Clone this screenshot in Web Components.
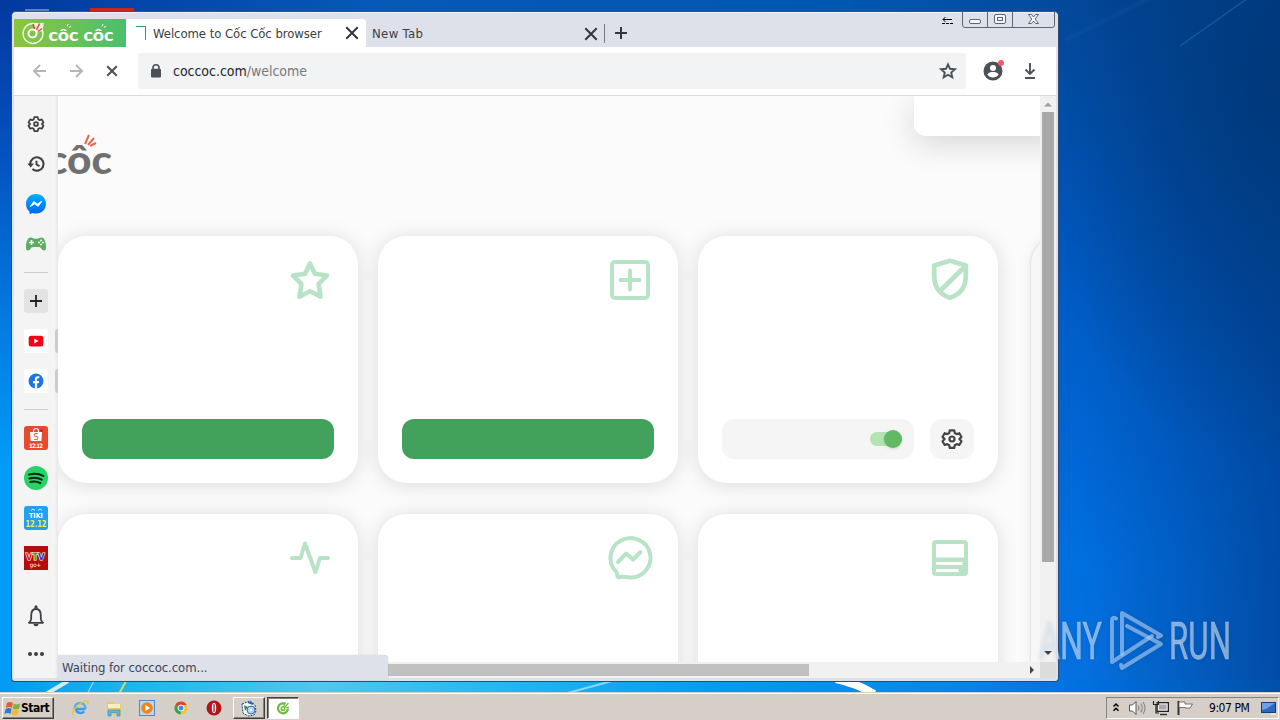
<!DOCTYPE html>
<html lang="vi">
<head>
<meta charset="utf-8">
<title>Welcome to Cốc Cốc browser</title>
<style>
  :root {
    --ui-font: "DejaVu Sans Condensed", "DejaVu Sans", "Liberation Sans", sans-serif;
    --chrome: #dee1e9;
    --mint: #b9e3c7;
    --green: #42a15b;
  }
  body {
    margin: 0;
    width: 1280px;
    height: 720px;
    overflow: hidden;
    font-family: var(--ui-font);
  }
</style>
</head>
<body>
<desktop-scene>
  <browser-window>
    <tab-strip slot="tabs"></tab-strip>
    <tool-bar slot="toolbar" host="coccoc.com" path="/welcome"></tool-bar>
    <side-bar slot="sidebar"></side-bar>
    <welcome-page slot="page">
      <feature-card icon="star"><action-button></action-button></feature-card>
      <feature-card icon="plus-box"><action-button></action-button></feature-card>
      <feature-card icon="shield"><toggle-row></toggle-row></feature-card>
      <feature-card icon="pulse"></feature-card>
      <feature-card icon="chat"></feature-card>
      <feature-card icon="panel"></feature-card>
    </welcome-page>
    <scroll-bar slot="vscroll" axis="y"></scroll-bar>
    <scroll-bar slot="hscroll" axis="x"></scroll-bar>
    <status-bubble slot="status">Waiting for coccoc.com...</status-bubble>
  </browser-window>
  <water-mark slot="mark"></water-mark>
  <task-bar slot="taskbar"></task-bar>
</desktop-scene>

<script>
(function () {
  function define(name, html, setup) {
    const template = document.createElement('template');
    template.innerHTML = html;
    customElements.define(name, class extends HTMLElement {
      constructor() {
        super();
        this.attachShadow({ mode: 'open' });
        this.shadowRoot.appendChild(template.content.cloneNode(true));
      }

      connectedCallback() {
        if (setup) setup(this, this.shadowRoot);
      }
    });
  }

  const GEAR = '<path d="M9.8 3.3h4.4l.6 2.7 1.9 1.1 2.6-.9 2.2 3.8-2 1.9v.4l2 1.9-2.2 3.8-2.6-.9-1.9 1.1-.6 2.7H9.8l-.6-2.7-1.900-1.100-2.600.9-2.200-3.800 2-1.900v-.4l-2-1.900 2.200-3.800 2.600.9L9.200 6z" fill="none" stroke="currentColor" stroke-width="2.200" stroke-linejoin="round"/><circle cx="12" cy="12" r="2.500" fill="none" stroke="currentColor" stroke-width="2.200"/>';

  // [viewBox, markup] by icon name
  const ICONS = {
    'star': ['0 0 48 48', '<path d="M24 7.500l4.900 10.300 12.100 1.700-8.400 8.300 2 12.800L24 35.300l-10.600 5.300 2-12.800L7 19.500l12.100-1.700z" fill="none" stroke="currentColor" stroke-width="4.600" stroke-linejoin="round"/>'],
    'plus-box': ['0 0 48 48', '<rect x="6" y="6" width="36" height="36" rx="3" fill="none" stroke="currentColor" stroke-width="4"/><path d="M24 14.500v19M14.500 24h19" stroke="currentColor" stroke-width="4" stroke-linecap="round"/>'],
    'shield': ['0 0 48 48', '<path d="M24 4.700L39.800 9.500V20c0 10.500-5.500 18.500-15.800 21.700C13.700 38.500 8.200 30.500 8.200 20V9.500z" fill="none" stroke="currentColor" stroke-width="4.800" stroke-linejoin="round"/><path d="M39 10.500L14 35" stroke="currentColor" stroke-width="5"/>'],
    'pulse': ['0 0 48 48', '<path d="M6 24h8.500l4.500-14.500L29.300 38 34 24h8" fill="none" stroke="currentColor" stroke-width="4" stroke-linecap="round" stroke-linejoin="round"/>'],
    'chat': ['0 0 48 48', '<path d="M12.200 43.500C10.500 42.800 11.800 39 9.800 37.200A20 19.700 0 1 1 24 43.500C20 43.500 18.500 41.500 12.200 43.500z" fill="none" stroke="currentColor" stroke-width="4" stroke-linejoin="round"/><path d="M12 28l8.200-8.500 6.800 6L34.500 18" fill="none" stroke="currentColor" stroke-width="4" stroke-linecap="round" stroke-linejoin="round"/>'],
    'panel': ['0 0 48 48', '<rect x="6" y="6" width="36" height="36" rx="4" fill="currentColor"/><path d="M10 10h28v13.500H10zM10 28h26.500v3H10zM10 35h22.500v3H10z" fill="#fff"/>'],
    'gear': ['0 0 24 24', GEAR],
    'gear-small': ['-3.200 -3.200 30.400 30.400', GEAR],
    'close': ['0 0 24 24', '<path d="M6.300 6.300l11.400 11.400M17.700 6.300L6.300 17.700" stroke="currentColor" stroke-width="2"/>'],
    'stop': ['0 0 24 24', '<path d="M7.200 7.200l9.600 9.600M16.800 7.200l-9.600 9.600" stroke="currentColor" stroke-width="2"/>'],
    'back': ['0 0 24 24', '<path d="M18 12H6.800M12 6l-6 6 6 6" fill="none" stroke="currentColor" stroke-width="1.900"/>'],
    'forward': ['0 0 24 24', '<path d="M6 12h11.200M12 6l6 6-6 6" fill="none" stroke="currentColor" stroke-width="1.900"/>'],
    'plus': ['0 0 24 24', '<path d="M12 6v12M6 12h12" stroke="currentColor" stroke-width="2"/>'],
    'lock': ['0 0 24 24', '<path d="M9 11V8.700a3 3 0 0 1 6 0V11" fill="none" stroke="currentColor" stroke-width="1.600"/><rect x="7" y="9.800" width="10" height="8.700" rx="1.300" fill="currentColor"/>'],
    'bookmark': ['0 0 24 24', '<path d="M12 5.300l2 4.500 4.900.4-3.700 3.300 1.100 4.900-4.300-2.600-4.300 2.600 1.100-4.900-3.700-3.300 4.900-.4z" fill="none" stroke="currentColor" stroke-width="1.900"/>'],
    'user': ['0 0 24 24', '<circle cx="12" cy="12" r="9.500" fill="currentColor"/><circle cx="12" cy="9" r="3" fill="#fff"/><path d="M6.300 15.600c1.200-2 3.500-2.600 5.700-2.600s4.500.6 5.700 2.600a7 7 0 0 1-11.400 0z" fill="#fff"/><circle cx="20" cy="4" r="3" fill="#f9556b"/>'],
    'download': ['0 0 24 24', '<path d="M12 4v10M7.500 10.500L12 15l4.500-4.500M7 19h10" fill="none" stroke="currentColor" stroke-width="1.900"/>'],
    'history': ['0 0 24 24', '<path d="M6.200 12a6.700 6.700 0 1 1 2.200 5" fill="none" stroke="currentColor" stroke-width="2.100"/><path d="M3.300 11.500h6.700L6.700 15.500z" fill="currentColor"/><path d="M12.500 8.700v3.800l3 1.700" fill="none" stroke="currentColor" stroke-width="1.900"/>'],
    'messenger': ['0 0 24 24', '<defs><linearGradient id="m" x1="0" y1="0" x2="0" y2="1"><stop stop-color="#00b0ff"/><stop offset="1" stop-color="#0264f5"/></linearGradient></defs><path d="M12 2c5.700 0 10 4.200 10 9.800s-4.300 9.800-10 9.800c-1.300 0-2.300-.1-3.200-.5L5.500 22v-2.500C3.200 17.700 2 15 2 11.800 2 6.200 6.300 2 12 2z" fill="url(#m)"/><path d="M6.300 14.600l3.500-5 3.600 2.500 4.300-2.800-3.500 5-3.600-2.500z" fill="#fff" stroke="#fff" stroke-linejoin="round"/>'],
    'gamepad': ['0 0 24 24', '<path d="M6.500 5.500c2 0 2 1.200 5.500 1.200s3.500-1.200 5.500-1.200c3.500 0 4.700 6.300 4.500 10.500-.1 3.200-3.300 3.200-4.500.8-.8-1.600-1.700-1.800-5.500-1.800s-4.700.2-5.500 1.800c-1.200 2.400-4.400 2.400-4.500-.8C1.800 11.800 3 5.500 6.500 5.500z" fill="#5bae5f"/><path d="M7.500 8v5M5 10.500h5" stroke="#fff" stroke-width="1.600"/><g fill="#fff"><circle cx="17" cy="8.500" r="1"/><circle cx="17" cy="12.500" r="1"/><circle cx="15" cy="10.500" r="1"/><circle cx="19" cy="10.500" r="1"/></g>'],
    'add': ['0 0 24 24', '<rect width="24" height="24" rx="3" fill="#e3e3e3"/><path d="M12 6v12M6 12h12" stroke="#222" stroke-width="1.800"/>'],
    'youtube': ['0 0 24 24', '<rect width="24" height="24" rx="2" fill="#fff"/><rect x="4.700" y="6.700" width="14.600" height="10.800" rx="2.500" fill="#f50014"/><path d="M10.300 9.500v5l4.200-2.500z" fill="#fff"/>'],
    'facebook': ['0 0 24 24', '<rect width="24" height="24" rx="2" fill="#fff"/><circle cx="12" cy="12" r="7.500" fill="#1b74e8"/><path d="M10.900 19.400v-5.200H9v-2.300h1.900v-1.700c0-2 1.200-3 2.900-3 .8 0 1.500.1 1.500.1v1.900h-1c-.9 0-1.200.6-1.200 1.100v1.600h2.100l-.4 2.300h-1.700v5.200z" fill="#fff"/>'],
    'shop': ['0 0 24 24', '<rect width="24" height="24" rx="3" fill="#e8492f"/><path d="M9.500 6V5a2.500 2.500 0 0 1 5 0v1" fill="none" stroke="#fff" stroke-width="1.200"/><path d="M6 6h12l-.6 9H6.600z" fill="#fff"/><text x="12" y="13.800" text-anchor="middle" font-size="9" fill="#e8492f">S</text><text x="12" y="21.500" text-anchor="middle" font-size="6" font-weight="700" fill="#fff" textLength="14">12.12</text><circle cx="17.500" cy="4.500" r="1.300" fill="#b5281b"/>'],
    'spotify': ['0 0 24 24', '<circle cx="12" cy="12" r="12" fill="#25d366"/><path d="M5 8.600c5-1.400 10-1 14.300 1.400M5.500 12.500c4.500-1.200 8.500-.8 12.200 1.200M6.200 16c3.600-.9 7-.6 10.200 1.100" fill="none" stroke="#0d1f14" stroke-width="2" stroke-linecap="round"/>'],
    'tiki': ['0 0 24 24', '<rect width="24" height="24" rx="3" fill="#22a0f2"/><text x="12" y="11.500" text-anchor="middle" font-size="7" font-weight="700" fill="#fff" textLength="14" lengthAdjust="spacingAndGlyphs">TIKI</text><path d="M7 4.500l2-1.500 2 1.500M14 4.500L16 3l2 1.500" fill="none" stroke="#fff" stroke-width=".8"/><text x="12" y="20.700" text-anchor="middle" font-size="8.500" font-weight="700" fill="#fbe84d" textLength="21" lengthAdjust="spacingAndGlyphs">12.12</text>'],
    'vtv': ['0 0 24 24', '<rect width="24" height="24" fill="#b50d0d"/><g font-size="9.500" font-weight="700" stroke="#fff" stroke-width="1.200" paint-order="stroke"><text x="1.700" y="13.500" fill="#e02020">V</text><text x="8.200" y="13.500" fill="#1fae3c">T</text><text x="14" y="13.500" fill="#2238c8">V</text></g><text x="11.500" y="20.500" text-anchor="middle" font-size="6" fill="#fff">go+</text>'],
    'bell': ['0 0 24 24', '<path d="M5 18.800c1.500-1.200 2.200-2.300 2.200-4.300v-3C7.200 7.500 9 5 12 5s4.800 2.500 4.800 6.500v3c0 2 .7 3.100 2.200 4.300z" fill="none" stroke="currentColor" stroke-width="1.800" stroke-linejoin="round"/><path d="M12 4.500V2.800" stroke="currentColor" stroke-width="3" stroke-linecap="round"/><path d="M9.500 20a2.500 2.300 0 0 0 5 0z" fill="currentColor"/>'],
    'dots': ['0 0 24 24', '<g fill="currentColor"><circle cx="6" cy="12" r="2"/><circle cx="12" cy="12" r="2"/><circle cx="18" cy="12" r="2"/></g>'],
    'flag-logo': ['0 0 16 16', '<g transform="skewX(-12) translate(2.500 0)"><path d="M1 3c2-1.500 4-1.500 6 0v5C5 6.500 3 6.500 1 8z" fill="#ea5b28"/><path d="M8 3.400c2 1.300 4 1.300 6.500 0v5c-2.500 1.300-4.500 1.300-6.500 0z" fill="#7bb33c"/><path d="M1 9c2-1.500 4-1.500 6 0v5c-2-1.500-4-1.500-6 0z" fill="#2f78d0"/><path d="M8 9.400c2 1.300 4 1.300 6.500 0v5c-2.500 1.300-4.500 1.300-6.500 0z" fill="#f5bb22"/></g>'],
    'ie': ['0 0 18 18', '<path d="M14.500 10H5.200c.2 4.500 5.500 5 8 2.300" fill="none" stroke="#3f9be0" stroke-width="2.600"/><path d="M3.700 10C3.500 2 14.300 2 14.500 10" fill="none" stroke="#56afe9" stroke-width="2.500"/><path d="M2 16C-1 12 12 .5 16.500 2.500c1 .6.500 2-.5 3" fill="none" stroke="#e4c33f" stroke-width="1.300"/>'],
    'folder': ['0 0 18 18', '<path d="M2 3h6l1 2h7v11H2z" fill="#e9ca63"/><path d="M3 5h12v4H3z" fill="#fbf1b8"/><path d="M3 17v-6h12v6h-3v-3.500H6V17z" fill="#66b3e3" stroke="#3c86bd" stroke-width=".6"/>'],
    'media': ['0 0 18 18', '<rect x="1.500" y="1.500" width="15" height="15" fill="#b8d8f2" stroke="#4b8ac6"/><circle cx="9" cy="9" r="5.800" fill="#f0861a"/><path d="M7.300 6v6L12 9z" fill="#fff"/>'],
    'chrome': ['0 0 18 18', '<circle cx="9" cy="9" r="6.500" fill="#f4c430"/><path d="M3.400 5.700A6.500 6.500 0 0 1 14.700 6H9a3 3 0 0 0-2.700 4.500z" fill="#dc4336"/><path d="M3.400 5.700l3.200 5.200L9.500 12l-1.300 3.500A6.500 6.500 0 0 1 3.400 5.700z" fill="#2da34f"/><circle cx="9" cy="9" r="3" fill="#4285f4" stroke="#fff"/>'],
    'opera': ['0 0 18 18', '<circle cx="9" cy="9" r="7.500" fill="#b3141c"/><ellipse cx="9" cy="9" rx="2.200" ry="5" fill="#fff"/><path d="M9 5v8" stroke="#b3141c" stroke-width="1.300"/>'],
    'tool-app': ['0 0 18 18', '<path d="M2 5l8-3 5 4 1 6-2 4-6 1-5-3z" fill="#f5f9fd" stroke="#173f7b" stroke-dasharray="2 1"/><circle cx="11" cy="11" r="4" fill="#b3d2f0" stroke="#3d68a8"/><circle cx="11" cy="11" r="1.200" fill="#fff"/><path d="M4 6l4 2-3 4z" fill="#38904e"/><path d="M8 3l5 2" stroke="#2067c0" stroke-width="2"/>'],
    'coccoc': ['0 0 18 18', '<path d="M11.500 5A5 5 0 1 0 14 9.500" fill="none" stroke="#6dbb3f" stroke-width="2.300"/><circle cx="9" cy="9.500" r="1.800" fill="none" stroke="#6dbb3f" stroke-width="1.500"/><path d="M10 7l1-3.500M11 8l3.500-4M12 9l3-1" stroke="#6dbb3f" stroke-width="1.200"/>'],
    'chevrons': ['0 0 16 16', '<path d="M5.500 6.500L8 4l2.500 2.500M5.500 10.800L8 8.300l2.500 2.500" fill="none" stroke="#000" stroke-width="1.500"/>'],
    'speaker': ['0 0 18 18', '<path d="M1.500 6h3L8 2.500v13L4.500 12h-3z" fill="#fff" stroke="#555"/><path d="M10 6.500q2 2.500 0 5M12.500 4.500q3.500 4.500 0 9M15 3q4 6 0 12" fill="none" stroke="#888" stroke-width="1.100"/>'],
    'network': ['0 0 18 18', '<rect x="5" y="3.500" width="11.500" height="9" fill="#8d8d8d" stroke="#222"/><path d="M6.500 5h8.500v6H6.500z" fill="#aaa" stroke="#fff" stroke-width=".8"/><path d="M8 15.500h7" stroke="#333" stroke-width="1.500"/><path d="M1.500 2v3.500h5V2M4 5.500V14h3" fill="none" stroke="#222" stroke-width="1.200"/>'],
    'flag': ['0 0 18 18', '<path d="M2.500 2v14" stroke="#333" stroke-width="2"/><path d="M3 3h6v2h7.500L14 9H9V8.500H3z" fill="#fff" stroke="#555" stroke-width=".8"/>'],
    'desktop': ['0 0 18 18', '<rect x="1.500" y="3.500" width="14" height="10" fill="#2a67bd" stroke="#133d7a"/><path d="M2 4h13l-9 6-4 1z" fill="#6aa2e4"/><path d="M11 15h5" stroke="#eee" stroke-width="1.500"/>']
  };

  define('ui-icon', `
    <style>
      :host { display: block; flex: none; width: 24px; height: 24px; }
      svg { display: block; width: 100%; height: 100%; overflow: visible; }
      text { font-family: "DejaVu Sans Condensed", "DejaVu Sans", sans-serif; }
    </style>
    <svg></svg>
  `, (host, root) => {
    const icon = ICONS[host.getAttribute('name')];
    if (!icon) return;
    const svg = root.querySelector('svg');
    svg.setAttribute('viewBox', icon[0]);
    svg.innerHTML = icon[1];
  });

  define('desktop-scene', `
    <style>
      :host {
        position: relative;
        display: flex;
        flex-direction: column;
        width: 1280px;
        height: 720px;
        overflow: hidden;
        background:
          radial-gradient(ellipse 260px 380px at 1280px 90px, rgba(0, 54, 115, .8), transparent),
          linear-gradient(90deg, transparent 1080px, rgba(0, 60, 140, .7) 1280px),
          linear-gradient(#034a9e 0, #0056bb 200px, #0061cd 380px, #006fe0 560px, #0671e0 690px);
      }
      .wall { position: absolute; left: 0; top: 0; }
      .area { flex: 1; min-height: 0; display: flex; padding: 11px 0 0 11px; position: relative; }
      ::slotted(water-mark) { position: absolute; left: 1030px; top: 605px; }
    </style>
    <svg class="wall" width="1280" height="720">
      <defs>
        <linearGradient id="left" x1="0" y1="0" x2="0" y2="1">
          <stop stop-color="#0339a0"/><stop offset=".2" stop-color="#0350bd"/>
          <stop offset=".45" stop-color="#037be0"/><stop offset=".65" stop-color="#019cf8"/><stop offset="1" stop-color="#019cf8"/>
        </linearGradient>
        <linearGradient id="top"><stop stop-color="#0339a0"/><stop offset=".35" stop-color="#0559b8"/><stop offset=".8" stop-color="#0057b0"/><stop offset="1" stop-color="#034a9e"/></linearGradient>
        <linearGradient id="floor">
          <stop stop-color="#0399f4"/><stop offset=".1" stop-color="#1cb5ec"/><stop offset=".25" stop-color="#4cc9ee"/>
          <stop offset=".38" stop-color="#29b7f2"/><stop offset=".55" stop-color="#079bf2"/><stop offset=".75" stop-color="#0784ec"/><stop offset=".85" stop-color="#006fe0"/><stop offset="1" stop-color="#0050a8"/>
        </linearGradient>
      </defs>
      <rect width="1060" height="12" fill="url(#top)"/>
      <rect width="14" height="720" fill="url(#left)"/>
      <rect y="680" width="1280" height="14" fill="url(#floor)"/>
      <rect x="90" y="8" width="44" height="6" fill="#c8281c"/>
      <rect x="25" y="9" width="24" height="3" fill="#7f9fc8" opacity=".7"/>
      <g stroke="#fff" fill="none">
        <path d="M68 681L46 694" stroke-width="4" opacity=".8"/>
        <path d="M94 681l-7 13" opacity=".7"/>
        <path d="M126 681l-7 13" stroke="#c8e05e" stroke-width="2"/>
        <path d="M612 681L564 694" stroke-width="2" opacity=".5"/>
        <path d="M836 679Q856 683 874 694" stroke-width="8"/>
        <path d="M1248 -2L1180 46" stroke="#2e6fb2" stroke-width="1.500" opacity=".5"/>
        <path d="M1150 -2L1065 40" stroke="#2467b0" stroke-width="5" opacity=".12"/>
      </g>
    </svg>
    <div class="area"><slot></slot></div>
    <slot name="mark"></slot>
    <slot name="taskbar"></slot>
  `);

  define('browser-window', `
    <style>
      :host {
        position: relative;
        box-sizing: border-box;
        display: flex;
        flex-direction: column;
        width: 1048px;
        height: 671px;
        padding: 0 2px 3px 2px;
        border: 1px solid #2d4b74;
        border-top-color: #36557d;
        border-radius: 5px 5px 4px 4px;
        background: var(--chrome);
        box-shadow: inset 0 1px #eef1f6;
      }
      .body { flex: 1; min-height: 0; display: flex; }
      .main { flex: 1; min-width: 0; display: flex; flex-direction: column; }
      .row { flex: 1; min-height: 0; display: flex; }
      .foot { display: flex; height: 16px; background: #dcdcdc; }
      ::slotted(welcome-page) { flex: 1; min-width: 0; }
      ::slotted(status-bubble) { position: absolute; left: 46px; bottom: 1px; }
    </style>
    <slot name="tabs"></slot>
    <slot name="toolbar"></slot>
    <div class="body">
      <slot name="sidebar"></slot>
      <div class="main">
        <div class="row"><slot name="page"></slot><slot name="vscroll"></slot></div>
        <div class="foot"><slot name="hscroll"></slot></div>
      </div>
    </div>
    <slot name="status"></slot>
  `);

  define('window-controls', `
    <style>
      :host { display: flex; align-items: flex-start; }
      svg { display: block; }
    </style>
    <svg width="119" height="18" fill="none" stroke="#5e6675">
      <path d="M6 7.500h9M8.500 5L6 7.500 8.500 10" stroke="#000"/>
      <path d="M5 11.500h11" stroke="#000" stroke-dasharray="3 1"/>
      <path d="M25.500 0v13q0 2.500 2.500 2.500h87q2.500 0 2.500-2.500V0M50.500 0v15M75.500 0v15"/>
      <rect x="32.500" y="7.500" width="11" height="4" rx="1.500" fill="#f6f7fa"/>
      <rect x="57.500" y="2.500" width="11" height="9" rx="1.500" fill="#f6f7fa"/>
      <rect x="60.500" y="5.500" width="5" height="3"/>
      <path d="M91.500 2.500h3l2 2.500 2-2.500h3l-3.300 4.500 3.300 4.500h-3l-2-2.500-2 2.500h-3l3.300-4.500z" fill="#f6f7fa"/>
    </svg>
  `);

  define('tab-strip', `
    <style>
      :host { display: flex; flex: none; height: 35px; font-size: 13px; color: #3b3d44; }
      .strip { display: flex; flex: 1; padding-top: 7px; }
      .logo { width: 112px; height: 28px; }
      .logo svg { display: block; }
      .tab { box-sizing: border-box; display: flex; align-items: center; height: 28px; }
      .tab span { flex: 1; white-space: nowrap; }
      .active { width: 240px; padding: 0 2px 0 10px; background: #fff; border-radius: 0 3px 0 0; gap: 7px; }
      .active span { letter-spacing: -.06px; }
      .other { width: 239px; padding: 0 1px 0 6px; border-right: 1px solid #777b85; height: 19px; margin-top: 5px; }
      .other span { letter-spacing: .35px; }
      .spin { width: 10px; height: 14px; box-sizing: border-box; border: solid #3a9c5c; border-width: 1px 1px 0 0; }
      .new { display: flex; align-items: center; height: 28px; padding-left: 4px; }
      ui-icon { color: #34363d; }
    </style>
    <div class="strip">
      <div class="logo">
        <svg width="112" height="28">
          <defs><linearGradient id="g"><stop stop-color="#8cc53e"/><stop offset="1" stop-color="#48c06c"/></linearGradient></defs>
          <rect width="112" height="28" fill="url(#g)"/>
          <circle cx="19" cy="14.500" r="10" fill="none" stroke="#f2f9ec" stroke-width="1.300"/>
          <path d="M19 4h11l-1.500 8-6.500 2z" fill="#f3f8ee" opacity=".85"/>
          <circle cx="18.500" cy="14.500" r="4" fill="#7fc24a" stroke="#fff" stroke-width="2"/>
          <path d="M20.500 10l-1.300-5M22.500 11l3-6.500M24 12.500l4-3" stroke="#dc4b3a" stroke-width="1.500"/>
          <g fill="#fff" font-family="Lato, sans-serif" font-weight="900" font-size="16.500">
            <text x="34.500" y="21.500" textLength="30" lengthAdjust="spacingAndGlyphs">côc</text>
            <text x="69.500" y="21.500" textLength="30" lengthAdjust="spacingAndGlyphs">côc</text>
          </g>
          <path d="M53 7.500l1-2.500M55 8.500l2-1.500M88 7.500l1-2.500M90 8.500l2-1.500" stroke="#fff"/>
        </svg>
      </div>
      <div class="tab active"><div class="spin"></div><span>Welcome to Cốc Cốc browser</span><ui-icon name="close"></ui-icon></div>
      <div class="tab other"><span>New Tab</span><ui-icon name="close"></ui-icon></div>
      <div class="new"><ui-icon name="plus"></ui-icon></div>
    </div>
    <window-controls></window-controls>
  `);

  define('tool-bar', `
    <style>
      :host {
        box-sizing: border-box;
        display: flex;
        align-items: center;
        flex: none;
        height: 49px;
        padding: 0 14px;
        border-bottom: 1px solid #d9dbde;
        background: #fff;
        color: #4d5156;
      }
      .nav { display: flex; gap: 12px; width: 110px; color: #b3b5b8; }
      .nav ui-icon:last-child { color: #4d5156; }
      .box {
        box-sizing: border-box;
        display: flex;
        align-items: center;
        width: 828px;
        height: 36px;
        padding: 0 6px;
        border-radius: 2px;
        background: #f1f3f4;
      }
      .url { flex: 1; padding-left: 5px; font-size: 14px; white-space: nowrap; color: #757a80; letter-spacing: -.03px; }
      .url b { font-weight: 400; color: #25262a; }
      .side { display: flex; gap: 13px; padding-left: 15px; }
    </style>
    <div class="nav">
      <ui-icon name="back"></ui-icon><ui-icon name="forward"></ui-icon><ui-icon name="stop"></ui-icon>
    </div>
    <div class="box">
      <ui-icon name="lock"></ui-icon>
      <div class="url"><b></b><span></span></div>
      <ui-icon name="bookmark"></ui-icon>
    </div>
    <div class="side"><ui-icon name="user"></ui-icon><ui-icon name="download"></ui-icon></div>
  `, (host, root) => {
    root.querySelector('b').textContent = host.getAttribute('host');
    root.querySelector('.url span').textContent = host.getAttribute('path');
  });

  define('side-bar', `
    <style>
      :host {
        box-sizing: border-box;
        display: flex;
        flex-direction: column;
        align-items: center;
        gap: 16px;
        flex: none;
        width: 44px;
        padding: 16px 0 12px;
        background: linear-gradient(90deg, #f4f4f4 40px, #e9e9e9);
        color: #3d3f42;
      }
      hr { width: 24px; height: 1px; margin: 0; border: 0; background: #ccc; }
      .pinned { display: flex; align-self: stretch; align-items: center; justify-content: space-between; padding-left: 10px; }
      .pinned::after { content: ""; width: 3px; height: 24px; border-radius: 3px 0 0 3px; background: #ccc; }
      .bottom { display: flex; flex-direction: column; gap: 14px; margin-top: auto; }
    </style>
    <ui-icon name="gear-small"></ui-icon>
    <ui-icon name="history"></ui-icon>
    <ui-icon name="messenger"></ui-icon>
    <ui-icon name="gamepad"></ui-icon>
    <hr>
    <ui-icon name="add"></ui-icon>
    <div class="pinned"><ui-icon name="youtube"></ui-icon></div>
    <div class="pinned"><ui-icon name="facebook"></ui-icon></div>
    <hr>
    <ui-icon name="shop"></ui-icon>
    <ui-icon name="spotify"></ui-icon>
    <ui-icon name="tiki"></ui-icon>
    <ui-icon name="vtv"></ui-icon>
    <div class="bottom"><ui-icon name="bell"></ui-icon><ui-icon name="dots"></ui-icon></div>
  `);

  define('welcome-page', `
    <style>
      :host { display: flex; flex-direction: column; overflow: hidden; background: #fbfbfb; }
      header { display: flex; justify-content: space-between; flex: none; height: 140px; }
      .brand { margin-top: 34px; display: block; }
      .popup {
        width: 150px;
        height: 40px;
        margin-right: -24px;
        border-radius: 0 0 0 12px;
        background: #fff;
        box-shadow: 0 8px 32px rgba(0, 0, 0, .15);
      }
      .content { display: flex; gap: 33px; }
      .grid { display: grid; grid-template-columns: repeat(3, 300px); grid-auto-rows: 247px; gap: 31px 20px; }
      .next {
        flex: none;
        width: 60px;
        height: 560px;
        border-radius: 28px 0 0 0;
        background: #f7f7f7;
        box-shadow: 0 0 3px rgba(0, 0, 0, .16), 0 0 16px rgba(0, 0, 0, .06);
      }
    </style>
    <header>
      <svg class="brand" width="70" height="50">
        <text x="-11" y="43.500" font-family="Lato, sans-serif" font-weight="900" font-size="40" fill="#707070" textLength="65" lengthAdjust="spacingAndGlyphs">côc</text>
        <path d="M27 14l4-9M30 15l6-7M32 16l6-3" stroke="#e8694f" stroke-width="2"/>
      </svg>
      <div class="popup"></div>
    </header>
    <div class="content">
      <div class="grid"><slot></slot></div>
      <div class="next"></div>
    </div>
  `);

  define('feature-card', `
    <style>
      :host {
        box-sizing: border-box;
        display: flex;
        flex-direction: column;
        justify-content: space-between;
        padding: 20px 24px 24px;
        border-radius: 28px;
        background: #fff;
        box-shadow: 0 2px 20px rgba(0, 0, 0, .13);
      }
      .icon { align-self: flex-end; color: var(--mint); }
      .icon ui-icon { width: 48px; height: 48px; }
    </style>
    <div class="icon"></div>
    <slot></slot>
  `, (host, root) => {
    const icon = document.createElement('ui-icon');
    icon.setAttribute('name', host.getAttribute('icon'));
    root.querySelector('.icon').replaceChildren(icon);
  });

  define('action-button', `
    <style>
      :host { display: block; height: 40px; border-radius: 12px; background: var(--green); }
    </style>
  `);

  define('toggle-row', `
    <style>
      :host { display: flex; gap: 16px; height: 40px; }
      .field, .settings { display: flex; align-items: center; border-radius: 12px; background: #f5f5f5; }
      .field { flex: 1; justify-content: flex-end; padding-right: 12px; }
      .settings { width: 44px; justify-content: center; color: #444; }
      .track { display: flex; justify-content: flex-end; align-items: center; width: 32px; height: 14px; border-radius: 7px; background: #b2e4b2; }
      .knob { width: 18px; height: 18px; border-radius: 50%; background: #62b962; box-shadow: 0 1px 3px rgba(0, 0, 0, .15); }
    </style>
    <div class="field"><div class="track"><div class="knob"></div></div></div>
    <div class="settings"><ui-icon name="gear"></ui-icon></div>
  `);

  define('scroll-bar', `
    <style>
      :host { display: flex; flex: none; box-sizing: border-box; background: #f1f1f1; }
      :host([axis="y"]) { flex-direction: column; width: 16px; }
      :host([axis="x"]) { width: 982px; height: 16px; align-items: center; }
      .thumb { background: #a8a8a8; }
      :host([axis="y"]) .thumb { height: 450px; margin: 0 2px; }
      :host([axis="x"]) .thumb { width: 735px; height: 12px; background: #c1c1c1; }
      .arrow { width: 16px; height: 16px; }
      .end { margin-left: auto; }
      :host([axis="y"]) .end { margin: auto 0 0; }
    </style>
    <svg class="arrow start" viewBox="0 0 16 16"></svg>
    <div class="thumb"></div>
    <svg class="arrow end" viewBox="0 0 16 16"></svg>
  `, (host, root) => {
    const vertical = host.getAttribute('axis') === 'y';
    root.querySelector('.start').innerHTML = vertical ? '<path d="M4 10.500h8L8 6.500z" fill="#a0a0a0"/>' : '';
    root.querySelector('.end').innerHTML = vertical
      ? '<path d="M4 5h8L8 9z" fill="#444"/>'
      : '<path d="M6 4v8l4-4z" fill="#444"/>';
  });

  define('status-bubble', `
    <style>
      :host {
        box-sizing: border-box;
        display: flex;
        align-items: center;
        width: 330px;
        height: 25px;
        padding-left: 4px;
        border-radius: 0 4px 0 0;
        background: var(--chrome);
        box-shadow: 0 0 1px rgba(0, 0, 0, .3);
        color: #3a4558;
        font-size: 13px;
        letter-spacing: -.07px;
        white-space: nowrap;
      }
    </style>
    <slot></slot>
  `);

  define('water-mark', `
    <style>
      :host { display: block; width: 210px; height: 72px; }
      svg { display: block; overflow: visible; filter: drop-shadow(0 0 2px rgba(0, 0, 0, .15)); }
    </style>
    <svg width="210" height="72">
      <g fill="#d9e6f6" fill-opacity=".6" stroke="#d9e6f6" stroke-opacity=".3" font-family="Roboto, sans-serif" font-size="51">
        <text x="9" y="54" textLength="63" lengthAdjust="spacingAndGlyphs">ANY</text>
        <text x="139" y="54" textLength="62" lengthAdjust="spacingAndGlyphs">RUN</text>
      </g>
      <g fill="none" stroke="#a9caf0" stroke-opacity=".65" stroke-width="4" stroke-linejoin="round" stroke-linecap="round">
        <path d="M92 49V8L131 30.500L128 32"/>
        <path d="M97 21l34 18-39 24-1-3"/>
        <path d="M86 13.500q-4-2-4 2V57L122 31"/>
      </g>
    </svg>
  `);

  define('task-bar', `
    <style>
      :host {
        box-sizing: border-box;
        display: flex;
        align-items: center;
        flex: none;
        height: 28px;
        padding: 2px 1px 0 2px;
        border-top: 1px solid #d4d0c8;
        box-shadow: inset 0 1px #fff;
        background: #d5cfc8;
        position: relative;
        color: #000;
      }
      .start, .app {
        box-sizing: border-box;
        display: flex;
        align-items: center;
        height: 22px;
        border: 1px solid;
        border-color: #fff #404040 #404040 #fff;
        box-shadow: inset -1px -1px #85817b;
      }
      .start { width: 52px; padding-left: 1px; gap: 1px; font-size: 12px; font-weight: 700; letter-spacing: -.5px; }
      .quick { display: flex; gap: 15.500px; padding: 0 10px 0 17px; }
      ui-icon { width: 18px; height: 18px; }
      .start ui-icon { width: 16px; height: 16px; }
      .app { width: 32px; justify-content: center; margin-right: 2px; }
      .pressed { border-color: #404040 #fff #fff #404040; background: #fff; box-shadow: inset 1px 1px #85817b; }
      .tray {
        box-sizing: border-box;
        display: flex;
        align-items: center;
        width: 173px;
        height: 22px;
        margin-left: auto;
        padding-left: 1px;
        border: 1px solid;
        border-color: #85817b #fff #fff #85817b;
        font-size: 12px;
      }
      .tray ui-icon { margin-right: 6px; }
      .tray ui-icon:first-child { width: 16px; height: 16px; margin-right: 4px; }
      .clock { margin-left: 9px; width: 50px; white-space: nowrap; letter-spacing: -.45px; }
      .tray ui-icon:last-child { margin: 0 0 0 auto; }
    </style>
    <div class="start"><ui-icon name="flag-logo"></ui-icon>Start</div>
    <div class="quick">
      <ui-icon name="ie"></ui-icon><ui-icon name="folder"></ui-icon><ui-icon name="media"></ui-icon><ui-icon name="chrome"></ui-icon><ui-icon name="opera"></ui-icon>
    </div>
    <div class="app"><ui-icon name="tool-app"></ui-icon></div>
    <div class="app pressed"><ui-icon name="coccoc"></ui-icon></div>
    <div class="tray">
      <ui-icon name="chevrons"></ui-icon><ui-icon name="speaker"></ui-icon><ui-icon name="network"></ui-icon><ui-icon name="flag"></ui-icon>
      <span class="clock">9:07 PM</span>
      <ui-icon name="desktop"></ui-icon>
    </div>
  `);
})();
</script>
</body>
</html>
